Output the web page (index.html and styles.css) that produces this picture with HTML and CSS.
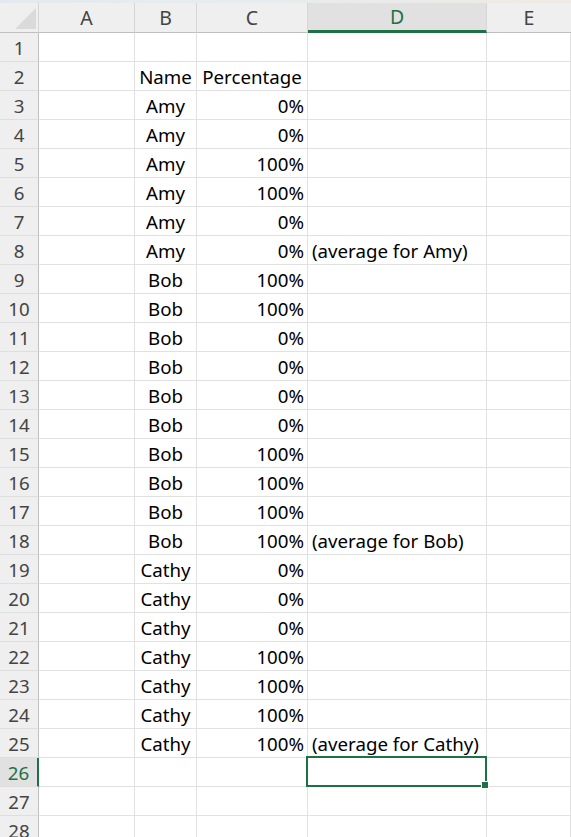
FILE: index.html
```html
<!DOCTYPE html>
<html>
<head>
<meta charset="utf-8">
<link rel="stylesheet" href="styles.css">
</head>
<body>
<div class="topstrip"></div>
<div class="sheet">
  <div class="corner"><div class="tri"></div></div>
  <div class="ch">A</div><div class="ch">B</div><div class="ch">C</div><div class="ch sel">D</div><div class="ch last">E</div>

  <div class="rh">1</div><div class="c"></div><div class="c"></div><div class="c"></div><div class="c"></div><div class="c"></div>
  <div class="rh">2</div><div class="c"></div><div class="c ctr">Name</div><div class="c ctr">Percentage</div><div class="c"></div><div class="c"></div>
  <div class="rh">3</div><div class="c"></div><div class="c ctr">Amy</div><div class="c num">0%</div><div class="c"></div><div class="c"></div>
  <div class="rh">4</div><div class="c"></div><div class="c ctr">Amy</div><div class="c num">0%</div><div class="c"></div><div class="c"></div>
  <div class="rh">5</div><div class="c"></div><div class="c ctr">Amy</div><div class="c num">100%</div><div class="c"></div><div class="c"></div>
  <div class="rh">6</div><div class="c"></div><div class="c ctr">Amy</div><div class="c num">100%</div><div class="c"></div><div class="c"></div>
  <div class="rh">7</div><div class="c"></div><div class="c ctr">Amy</div><div class="c num">0%</div><div class="c"></div><div class="c"></div>
  <div class="rh">8</div><div class="c"></div><div class="c ctr">Amy</div><div class="c num">0%</div><div class="c txt">(average for Amy)</div><div class="c"></div>
  <div class="rh">9</div><div class="c"></div><div class="c ctr">Bob</div><div class="c num">100%</div><div class="c"></div><div class="c"></div>
  <div class="rh">10</div><div class="c"></div><div class="c ctr">Bob</div><div class="c num">100%</div><div class="c"></div><div class="c"></div>
  <div class="rh">11</div><div class="c"></div><div class="c ctr">Bob</div><div class="c num">0%</div><div class="c"></div><div class="c"></div>
  <div class="rh">12</div><div class="c"></div><div class="c ctr">Bob</div><div class="c num">0%</div><div class="c"></div><div class="c"></div>
  <div class="rh">13</div><div class="c"></div><div class="c ctr">Bob</div><div class="c num">0%</div><div class="c"></div><div class="c"></div>
  <div class="rh">14</div><div class="c"></div><div class="c ctr">Bob</div><div class="c num">0%</div><div class="c"></div><div class="c"></div>
  <div class="rh">15</div><div class="c"></div><div class="c ctr">Bob</div><div class="c num">100%</div><div class="c"></div><div class="c"></div>
  <div class="rh">16</div><div class="c"></div><div class="c ctr">Bob</div><div class="c num">100%</div><div class="c"></div><div class="c"></div>
  <div class="rh">17</div><div class="c"></div><div class="c ctr">Bob</div><div class="c num">100%</div><div class="c"></div><div class="c"></div>
  <div class="rh">18</div><div class="c"></div><div class="c ctr">Bob</div><div class="c num">100%</div><div class="c txt">(average for Bob)</div><div class="c"></div>
  <div class="rh">19</div><div class="c"></div><div class="c ctr">Cathy</div><div class="c num">0%</div><div class="c"></div><div class="c"></div>
  <div class="rh">20</div><div class="c"></div><div class="c ctr">Cathy</div><div class="c num">0%</div><div class="c"></div><div class="c"></div>
  <div class="rh">21</div><div class="c"></div><div class="c ctr">Cathy</div><div class="c num">0%</div><div class="c"></div><div class="c"></div>
  <div class="rh">22</div><div class="c"></div><div class="c ctr">Cathy</div><div class="c num">100%</div><div class="c"></div><div class="c"></div>
  <div class="rh">23</div><div class="c"></div><div class="c ctr">Cathy</div><div class="c num">100%</div><div class="c"></div><div class="c"></div>
  <div class="rh">24</div><div class="c"></div><div class="c ctr">Cathy</div><div class="c num">100%</div><div class="c"></div><div class="c"></div>
  <div class="rh">25</div><div class="c"></div><div class="c ctr">Cathy</div><div class="c num">100%</div><div class="c txt">(average for Cathy)</div><div class="c"></div>
  <div class="rh rsel">26</div><div class="c"></div><div class="c"></div><div class="c"></div><div class="c active"><div class="selbox"><div class="handle"></div></div></div><div class="c"></div>
  <div class="rh">27</div><div class="c"></div><div class="c"></div><div class="c"></div><div class="c"></div><div class="c"></div>
  <div class="rh">28</div><div class="c"></div><div class="c"></div><div class="c"></div><div class="c"></div><div class="c"></div>
</div>
</body>
</html>
```
FILE: styles.css
```css
html, body {
  margin: 0;
  padding: 0;
  background: #ffffff;
  overflow: hidden;
  height: 837px;
}
body {
  font-family: "Noto Sans", "Open Sans", sans-serif;
  font-size: 18.7px;
  color: #000;
}
.topstrip {
  height: 3px;
  background: linear-gradient(90deg, #e3eaef 0%, #e8ecee 50%, #efe9e2 100%);
}
.sheet {
  display: grid;
  grid-template-columns: 39px 96px 62px 111px 179px 1fr;
  grid-template-rows: 30px repeat(28, 29px);
}
.corner {
  background: #efefef;
  border-right: 1px solid #d6d6d6;
  border-bottom: 1px solid #bfbfbf;
  box-sizing: border-box;
  position: relative;
}
.tri {
  position: absolute;
  left: 15px;
  top: 5px;
  width: 21px;
  height: 21px;
  background: #dadada;
  clip-path: polygon(100% 0, 100% 100%, 0 100%);
}
.ch {
  background: #efefef;
  color: #444;
  border-right: 1px solid #d6d6d6;
  border-bottom: 1px solid #bfbfbf;
  box-sizing: border-box;
  text-align: center;
  line-height: 29px;
  font-size: 19.5px;
}
.ch.sel {
  background: #e1e1e1;
  color: #1e7145;
  border-bottom: 3px solid #1e7145;
  line-height: 27px;
}
.ch.last { border-right: none; }
.rh {
  background: #efefef;
  color: #444;
  border-right: 1px solid #bfbfbf;
  border-bottom: 1px solid #dedede;
  box-sizing: border-box;
  text-align: center;
  padding-top: 2px;
  line-height: 26px;
  font-size: 18.7px;
}
.rh.rsel {
  background: #e1e1e1;
  color: #1e7145;
  border-right: 2px solid #1e7145;
}
.c {
  border-right: 1px solid #e1e1e1;
  border-bottom: 1px solid #e1e1e1;
  box-sizing: border-box;
  padding-top: 2px;
  line-height: 26px;
  white-space: nowrap;
  overflow: visible;
  position: relative;
}
.ctr { text-align: center; }
.num { text-align: right; padding-right: 3px; }
.txt { padding-left: 4px; }
.active { z-index: 2; }
.selbox {
  position: absolute;
  left: -2px;
  right: -1px;
  top: -2px;
  bottom: -1px;
  border: 2px solid #1e7145;
}
.handle {
  position: absolute;
  right: -4px;
  bottom: -4px;
  width: 6px;
  height: 6px;
  background: #1e7145;
  border: 1px solid #fff;
}
```
